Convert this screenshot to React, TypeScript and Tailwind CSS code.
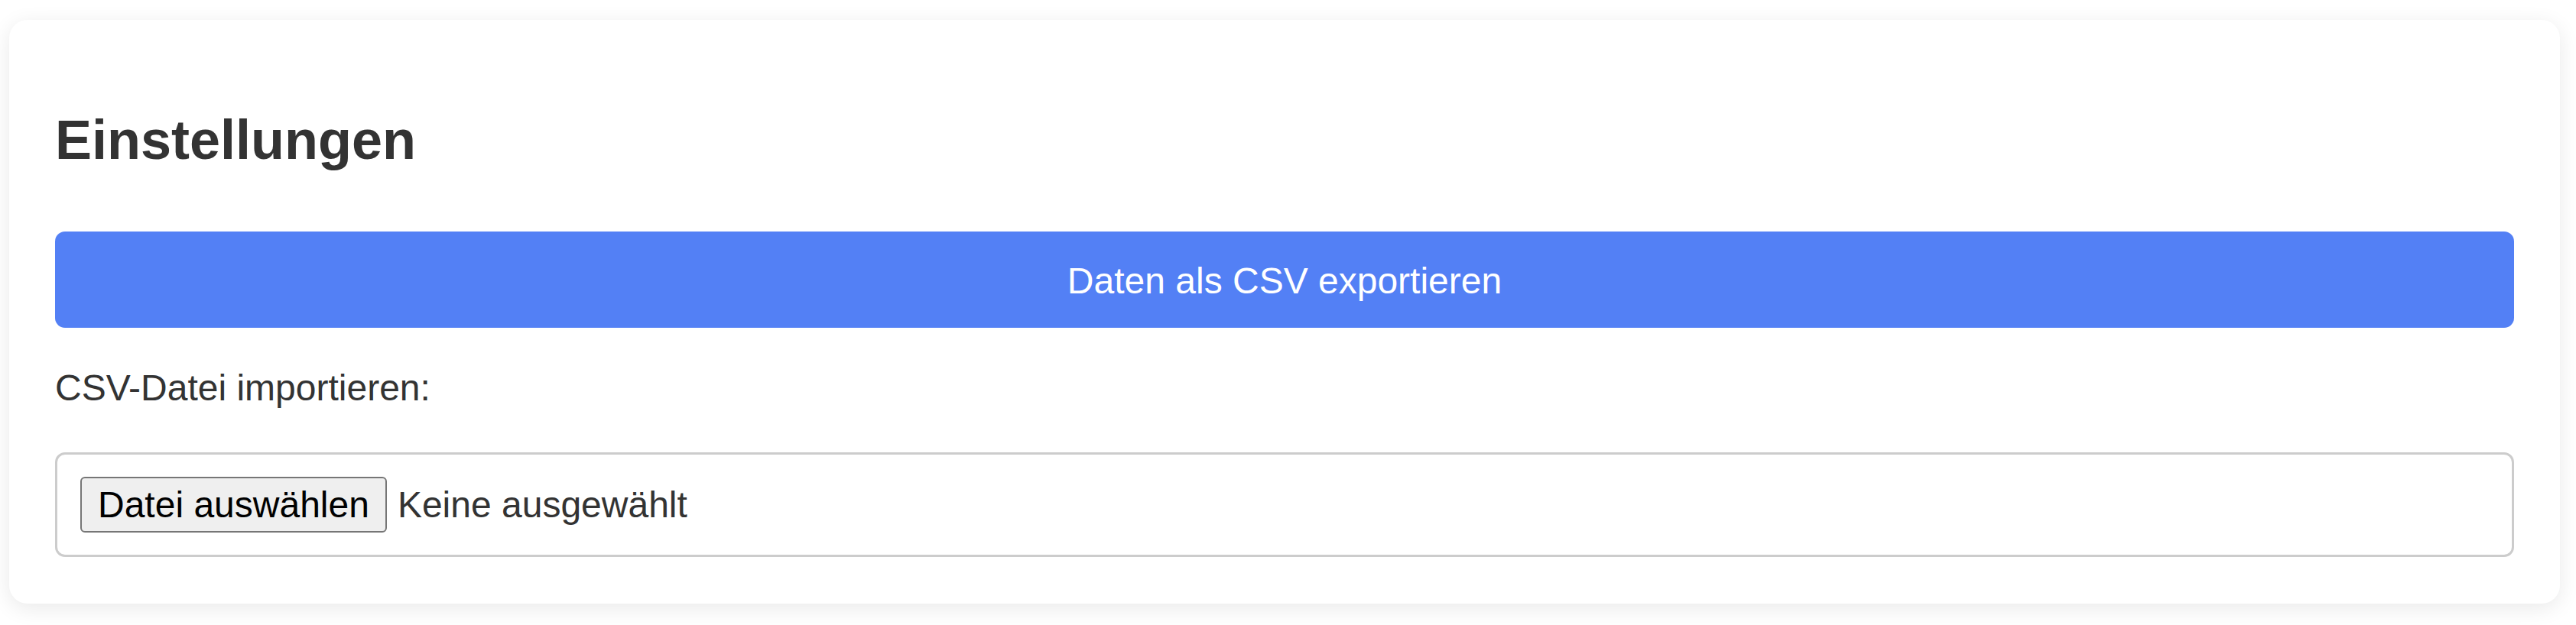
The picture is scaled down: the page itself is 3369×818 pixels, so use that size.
import React from 'react'

// Settings card: export button + CSV import field
export default function App() {
    return (
        <div className="min-h-screen bg-white pt-[26px] pl-[12px] font-['Liberation_Sans',Arial,sans-serif] text-[#333]">
            <div className="w-[3336px] rounded-[24px] bg-white px-[60px] pt-[60px] pb-[61px] shadow-[0_6px_28px_rgba(0,0,0,0.09)]">
                <h2 className="mt-[56px] text-[72px] leading-[83px] font-bold">
                    Einstellungen
                </h2>

                <button
                    type="button"
                    className="mt-[78px] flex h-[126px] w-full items-center justify-center rounded-[13px] bg-[#5380f5] pt-[2px] text-[48px] leading-[55px] text-white">
                    Daten als CSV exportieren
                </button>

                <label className="mt-[51px] block text-[48px] leading-[55px]">
                    CSV-Datei importieren:
                </label>

                {/* fake file input, real one would show the browser's own locale text */}
                <div className="mt-[57px] flex h-[137px] items-center rounded-[13px] border-[3px] border-[#cccccc] px-[30px]">
                    <span className="flex h-[73px] items-center rounded-[6px] border-2 border-[#767676] bg-[#efefef] px-[21px] text-[48px] leading-[55px] text-black">
                        Datei auswählen
                    </span>
                    <span className="ml-[14px] text-[48px] leading-[55px]">
                        Keine ausgewählt
                    </span>
                </div>
            </div>
        </div>
    )
}
